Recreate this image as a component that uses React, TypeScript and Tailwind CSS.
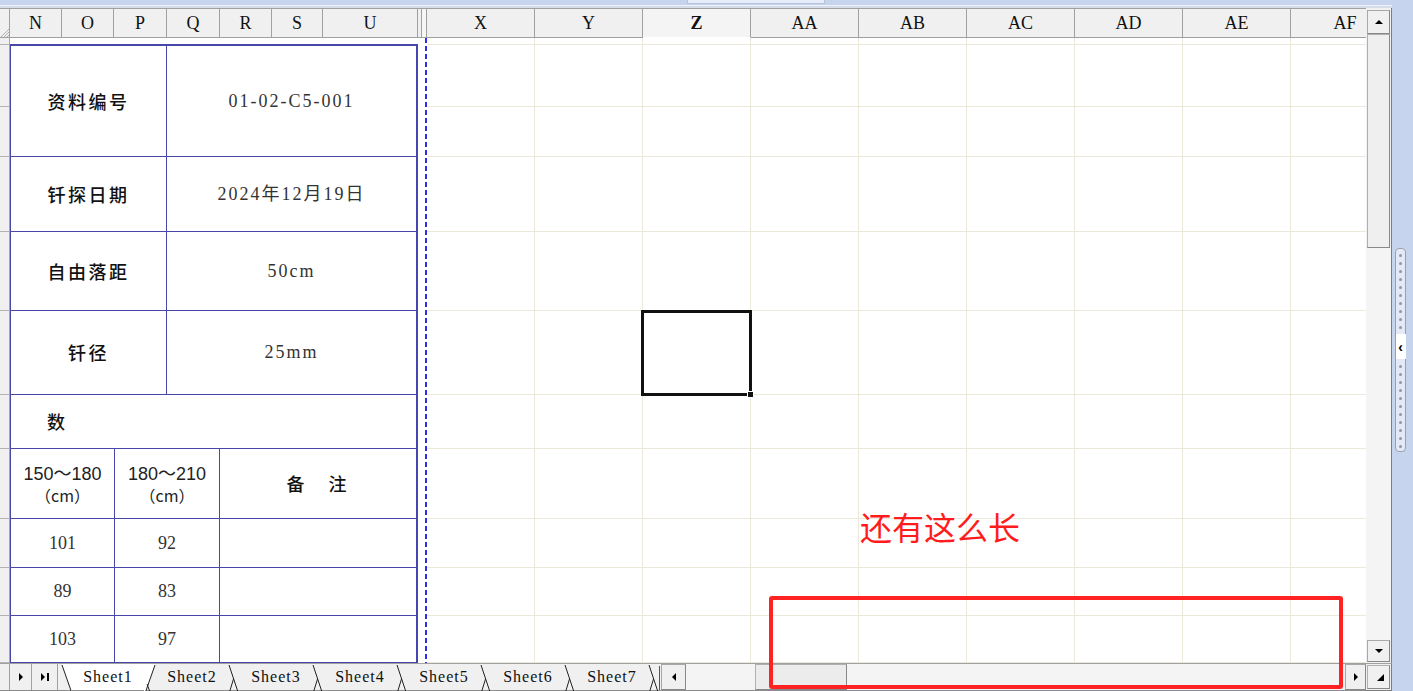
import React from "react";

const hdrL: [string, string][] = [
  ["N", "w-[52px]"],
  ["O", "w-[52px]"],
  ["P", "w-[53px]"],
  ["Q", "w-[53px]"],
  ["R", "w-[52px]"],
  ["S", "w-[51px]"],
  ["U", "w-[95px]"],
];
const hdrR = ["X", "Y", "Z", "AA", "AB", "AC", "AD", "AE"];
const rowCls = [
  "h-[7px]",
  "h-[62px]",
  "h-[50px]",
  "h-[75px]",
  "h-[79px]",
  "h-[84px]",
  "h-[54px]",
  "h-[70px]",
  "h-[49px]",
  "h-[48px]",
  "h-[47px]",
];

const cjk = "font-['Noto_Sans_CJK_SC',sans-serif]";
const serif = "font-['Liberation_Serif','Noto_Sans_CJK_SC',serif]";
const tb = "border-[#4747a9]";

function Tri({ dir, className = "" }: { dir: "up" | "down" | "left" | "right" | "corner"; className?: string }) {
  const pts: Record<string, string> = {
    up: "0,5 4,1 8,5",
    down: "0,1 8,1 4,5",
    left: "5,0 5,8 1,4",
    right: "1,0 1,8 5,4",
    corner: "7,0 7,7 0,7",
  };
  const wh: Record<string, [number, number]> = {
    up: [8, 6],
    down: [8, 6],
    left: [6, 8],
    right: [6, 8],
    corner: [7, 7],
  };
  const [w, h] = wh[dir];
  return (
    <svg width={w} height={h} viewBox={`0 0 ${w} ${h}`} className={className}>
      <polygon points={pts[dir]} fill="#000" />
    </svg>
  );
}

function Sep({ kind }: { kind: "first" | "afterActive" | "mid" | "last" }) {
  return (
    <svg width="12" height="28" viewBox="0 0 12 28" className="shrink-0">
      {kind === "first" && (
        <>
          <polygon points="2,0 12,0 12,28 11.5,28" fill="#fff" />
          <line x1="2" y1="1" x2="11.5" y2="28" stroke="#222" strokeWidth="1" />
        </>
      )}
      {kind === "afterActive" && (
        <>
          <polygon points="0,0 11,0 1.5,28 0,28" fill="#fff" />
          <line x1="1.5" y1="28" x2="11" y2="1" stroke="#222" strokeWidth="1" />
          <line x1="3" y1="20" x2="6" y2="28" stroke="#222" strokeWidth="1" />
        </>
      )}
      {kind === "mid" && (
        <>
          <line x1="1" y1="1" x2="10" y2="28" stroke="#222" strokeWidth="1" />
          <line x1="5.5" y1="15" x2="1.5" y2="28" stroke="#222" strokeWidth="1" />
        </>
      )}
      {kind === "last" && (
        <>
          <line x1="1" y1="1" x2="10" y2="28" stroke="#222" strokeWidth="1" />
          <line x1="5.5" y1="15" x2="1.5" y2="28" stroke="#222" strokeWidth="1" />
          <line x1="11.5" y1="2" x2="11.5" y2="26" stroke="#555" strokeWidth="1" />
        </>
      )}
    </svg>
  );
}

function Dots({ n }: { n: number }) {
  return (
    <div className="flex flex-col items-center gap-[5px]">
      {Array.from({ length: n }).map((_, i) => (
        <div key={i} className="w-[3px] h-[3px] rounded-full bg-[#8f97a8]" />
      ))}
    </div>
  );
}

function InfoRow({ h, label, value, labelCls = "" }: { h: string; label: string; value: string; labelCls?: string }) {
  return (
    <div className={`flex border-b ${tb} ${h}`}>
      <div className={`w-[156px] flex items-center justify-center border-r ${tb} ${cjk} text-[18px] font-medium text-[#111] ${labelCls}`}>
        {label}
      </div>
      <div className={`flex-1 flex items-center justify-center ${serif} text-[18px] tracking-[2px] text-[#333]`}>
        {value}
      </div>
    </div>
  );
}

function DataRow({ h, a, b }: { h: string; a: string; b: string }) {
  return (
    <div className={`flex border-b ${tb} ${h}`}>
      <div className={`w-[104px] flex items-center justify-center border-r ${tb} ${serif} text-[18px] text-[#333]`}>{a}</div>
      <div className={`w-[105px] flex items-center justify-center border-r ${tb} ${serif} text-[18px] text-[#333]`}>{b}</div>
      <div className="flex-1" />
    </div>
  );
}

function RangeCell({ w, a, b }: { w: string; a: string; b: string }) {
  return (
    <div className={`${w} flex flex-col items-center justify-center border-r ${tb} text-[#222]`}>
      <div className="text-[18px] leading-[21px] whitespace-nowrap">
        {a}
        <span className={cjk}>～</span>
        {b}
      </div>
      <div className={`${cjk} text-[16px] leading-[20px] whitespace-nowrap`}>（cm）</div>
    </div>
  );
}

export default function App() {
  const tabs = ["Sheet1", "Sheet2", "Sheet3", "Sheet4", "Sheet5", "Sheet6", "Sheet7"];
  return (
    <div className="relative w-[1413px] h-[691px] overflow-hidden flex bg-[#c7d4ee] font-['Liberation_Sans',sans-serif]">
      {/* left main */}
      <div className="w-[1392px] flex flex-col">
        {/* top strip */}
        <div className="h-[8px] flex flex-col">
          <div className="h-[5px] relative">
            <div className="absolute left-[687px] top-0 w-[138px] h-[4px] bg-[#e6ecf8] border-b border-x border-[#b7c3dc]" />
          </div>
          <div className="h-[1px] bg-[#eef2fa]" />
          <div className="h-[2px] bg-[#d4dcec]" />
        </div>

        {/* sheet area */}
        <div className="flex h-[655px]">
          <div className="w-[1366px] flex flex-col">
            {/* column header */}
            <div className={`h-[30px] flex bg-[#f0f0f0] border-t border-b border-[#a0a0a0] ${serif} text-[18px] text-[#111]`}>
              <div className="w-[10px] border-r border-[#a0a0a0] flex items-end justify-end">
                <svg width="9" height="10" viewBox="0 0 9 10">
                  <line x1="9" y1="2" x2="1" y2="10" stroke="#b0b0b0" />
                  <line x1="9" y1="5" x2="4" y2="10" stroke="#b0b0b0" />
                  <line x1="9" y1="8" x2="7" y2="10" stroke="#b0b0b0" />
                </svg>
              </div>
              {hdrL.map(([t, w]) => (
                <div key={t} className={`${w} flex items-center justify-center border-r border-[#a0a0a0]`}>
                  {t}
                </div>
              ))}
              <div className="w-[9px] flex">
                <div className="w-[3px]" />
                <div className="w-[1px] bg-[#a0a0a0]" />
                <div className="w-[4px] bg-[#f6f6f6]" />
                <div className="w-[1px] bg-[#a0a0a0]" />
              </div>
              {hdrR.map((t) =>
                t === "Z" ? (
                  <div key={t} className="w-[108px] flex items-center justify-center border-r border-[#a0a0a0] font-bold bg-[#f4f4f4] -mb-[1px] border-b border-b-white">
                    {t}
                  </div>
                ) : (
                  <div key={t} className="w-[108px] flex items-center justify-center border-r border-[#a0a0a0]">
                    {t}
                  </div>
                )
              )}
              <div className="w-[75px] overflow-hidden">
                <div className="w-[108px] h-full flex items-center justify-center">AF</div>
              </div>
            </div>

            {/* body */}
            <div className="flex h-[625px] bg-white">
              {/* row gutter */}
              <div className="w-[10px] flex flex-col bg-[#f0f0f0] border-r border-[#a8a8a8]">
                {rowCls.map((h, i) => (
                  <div key={i} className={`${h} border-b border-[#b4b4b4]`} />
                ))}
              </div>

              {/* left frozen table */}
              <div className="w-[408px] flex flex-col bg-white">
                <div className="h-[6px]" />
                <div className={`flex-1 flex flex-col border-t-2 border-r-2 border-l ${tb}`}>
                  <InfoRow h="h-[111px]" label="资料编号" value="01-02-C5-001" labelCls="tracking-[2.5px]" />
                  <InfoRow h="h-[75px]" label="钎探日期" value="2024年12月19日" labelCls="tracking-[2.5px]" />
                  <InfoRow h="h-[79px]" label="自由落距" value="50cm" labelCls="tracking-[2.5px]" />
                  <InfoRow h="h-[84px]" label="钎径" value="25mm" labelCls="tracking-[2.5px]" />
                  <div className={`h-[54px] flex items-center border-b ${tb} pl-[36px] ${cjk} text-[18px] font-medium text-[#111]`}>
                    数
                  </div>
                  <div className={`h-[70px] flex border-b ${tb}`}>
                    <RangeCell w="w-[104px]" a="150" b="180" />
                    <RangeCell w="w-[105px]" a="180" b="210" />
                    <div className={`flex-1 flex items-center justify-center ${cjk} text-[18px] font-medium text-[#111] tracking-[3px]`}>
                      备　注
                    </div>
                  </div>
                  <DataRow h="h-[49px]" a="101" b="92" />
                  <DataRow h="h-[48px]" a="89" b="83" />
                  <DataRow h="h-[47px]" a="103" b="97" />
                </div>
              </div>

              {/* freeze divider with page break */}
              <div className="w-[9px] flex justify-end">
                <div className="w-[2px] h-full bg-[repeating-linear-gradient(to_bottom,#2d2df0_0px,#2d2df0_5px,transparent_5px,transparent_8px)]" />
              </div>

              {/* right grid */}
              <div className="w-[939px] flex flex-col">
                {rowCls.map((h, i) => (
                  <div key={i} className={`${h} flex border-b border-[#ece9d9]`}>
                    {hdrR.map((c) => (
                      <div key={c} className="w-[108px] h-full border-r border-[#ece9d9]" />
                    ))}
                    <div className="w-[75px] h-full" />
                  </div>
                ))}
              </div>
            </div>
          </div>

          {/* vertical scrollbar */}
          <div className="w-[26px] flex flex-col border-r border-[#7d7d7d] bg-[#f1f1f1]">
            <div className="h-[2px]" />
            <div className="h-[24px] mx-[1px] flex items-center justify-center bg-[#f0f0f0] border border-[#a8a8a8] border-r-[#888] border-b-[#888]">
              <Tri dir="up" />
            </div>
            <div className="h-[214px] mx-[1px] bg-[#efefef] border border-[#b0b0b0] border-r-[#888] border-b-[#888]" />
            <div className="flex-1 bg-[#f4f4f4]" />
            <div className="h-[22px] mx-[1px] flex items-center justify-center bg-[#f0f0f0] border border-[#a8a8a8] border-r-[#888] border-b-[#888]">
              <Tri dir="down" />
            </div>
            <div className="h-[1px]" />
          </div>
        </div>

        {/* tab bar */}
        <div className="h-[28px] flex bg-[#f0f0f0] border-t border-[#a0a0a0]">
          <div className="w-[1366px] flex border-b border-[#8c8c8c]">
            <div className="w-[10px] border-r border-[#a0a0a0]" />
            <div className="w-[22px] flex items-center justify-center border-r border-[#a0a0a0]">
              <Tri dir="right" />
            </div>
            <div className="w-[26px] flex items-center justify-center gap-[1px] border-r border-[#a0a0a0]">
              <Tri dir="right" />
              <div className="w-[1.5px] h-[8px] bg-black" />
            </div>
            <div className="w-[2px]" />
            <div className={`flex ${serif} text-[16px] tracking-[1px] text-[#111]`}>
              <Sep kind="first" />
              {tabs.map((t, i) => (
                <React.Fragment key={t}>
                  <div className={`w-[72px] flex items-center justify-center ${i === 0 ? "bg-white" : ""}`}>{t}</div>
                  <Sep kind={i === 0 ? "afterActive" : i === tabs.length - 1 ? "last" : "mid"} />
                </React.Fragment>
              ))}
            </div>
            <div className="w-[1px]" />
            <div className="w-[25px] flex items-center justify-center border border-[#a8a8a8] border-r-[#888] border-b-[#888] bg-[#f0f0f0]">
              <Tri dir="left" />
            </div>
            <div className="flex-1 flex bg-[#f4f4f4]">
              <div className="w-[69px]" />
              <div className="w-[92px] bg-[#ececec] border border-[#b0b0b0] border-r-[#888] border-b-[#888]" />
            </div>
            <div className="w-[21px] flex items-center justify-center border border-[#a8a8a8] border-r-[#888] border-b-[#888] bg-[#f0f0f0]">
              <Tri dir="right" />
            </div>
          </div>
          <div className="w-[26px] flex items-center justify-center border-r border-b border-[#7d7d7d] bg-[#f0f0f0]">
            <div className="w-[23px] h-[24px] flex items-end justify-end pr-[5px] pb-[7px] border border-[#b0b0b0] border-r-[#888] border-b-[#888]">
              <Tri dir="corner" />
            </div>
          </div>
        </div>
      </div>

      {/* right side panel */}
      <div className="w-[21px] flex flex-col pt-[248px] pl-[3px]">
        <div className="w-[11px] h-[204px] flex flex-col items-center rounded-[4px] border border-[#9aa0ad] bg-[#e3e9f5] pt-[5px]">
          <Dots n={10} />
          <div className="mt-[5px] w-[10px] h-[25px] bg-white flex items-center justify-center text-[14px] font-bold leading-none text-black">
            ‹
          </div>
          <div className="mt-[6px]">
            <Dots n={11} />
          </div>
        </div>
      </div>

      {/* overlays: selected cell */}
      <div className="absolute left-[641px] top-[310px] w-[111px] h-[86px] border-[3px] border-[#111]" />
      <div className="absolute left-[747px] top-[391px] w-[7px] h-[7px] bg-[#111] border border-white" />

      {/* annotation */}
      <div className={`absolute left-[860px] top-[510px] ${cjk} text-[32px] leading-none text-[#ff1c1c]`}>还有这么长</div>
      <div className="absolute left-[769px] top-[596px] w-[574px] h-[93px] border-[4px] border-[#ff2222] rounded-[3px]" />
    </div>
  );
}
